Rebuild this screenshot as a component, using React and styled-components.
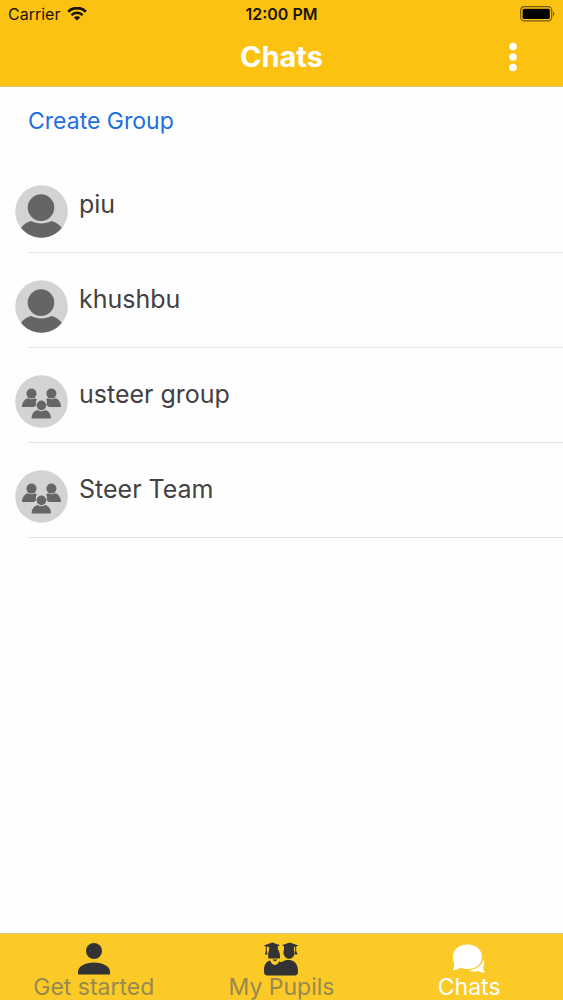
import React, { useState } from "react";
import styled, { createGlobalStyle } from "styled-components";

const chats = [
  { id: 1, name: "piu", group: false },
  { id: 2, name: "khushbu", group: false },
  { id: 3, name: "usteer group", group: true },
  { id: 4, name: "Steer Team", group: true },
];

const WifiIcon = () => (
  <svg width="20" height="14" viewBox="0 0 20 14" fill="none" aria-hidden="true">
    <path d="M1.2 4.8C6 -0.1 14 -0.1 18.8 4.8" stroke="#1a1503" strokeWidth="2.9" />
    <path d="M4.4 8.1C7.5 5 12.5 5 15.6 8.1" stroke="#1a1503" strokeWidth="2.6" />
    <path d="M10 13.6L6.8 10.5C8.5 8.8 11.5 8.8 13.2 10.5Z" fill="#1a1503" />
  </svg>
);

const BatteryIcon = () => (
  <svg width="35" height="16" viewBox="0 0 35 16" aria-hidden="true">
    <rect x="0.7" y="0.7" width="31" height="14.2" rx="3.6" fill="none" stroke="#6f5a14" strokeWidth="1.2" />
    <rect x="2.6" y="2.7" width="27.2" height="10.2" rx="1.5" fill="#000" />
    <path d="M33 5.4C34.8 6.2 34.8 9.4 33 10.2Z" fill="#6f5a14" />
  </svg>
);

const DotsIcon = () => (
  <svg width="8" height="30" viewBox="0 0 8 30" fill="#fff" aria-hidden="true">
    <circle cx="4" cy="4.5" r="3.8" />
    <circle cx="4" cy="15" r="3.8" />
    <circle cx="4" cy="25.5" r="3.8" />
  </svg>
);

const UserAvatar = () => (
  <svg width="53" height="53" viewBox="0 0 53 53" aria-hidden="true">
    <circle cx="26.5" cy="26.5" r="26.3" fill="#d4d2d3" />
    <circle cx="26" cy="22.6" r="13.3" fill="#666465" />
    <path
      d="M6 42.8C8.5 39.5 12 37.2 16.2 36C22 39.2 30.5 39.2 36.4 36C40.6 37.2 44.2 39.5 46.8 42.8C41.8 49 34.6 52.8 26.5 52.8C18.2 52.8 11 49 6 42.8Z"
      fill="#666465"
    />
  </svg>
);

const GroupAvatar = () => (
  <svg width="53" height="53" viewBox="0 0 53 53" fill="#666465" aria-hidden="true">
    <circle cx="26.5" cy="26.5" r="26.3" fill="#d4d2d3" />
    <circle cx="16.5" cy="18.6" r="5" />
    <path d="M7 32C7 27 10 23.8 13 23.3C15 24.6 18 24.6 20 23.3L22 24.6C20.6 26.3 20.6 28.6 21.4 30C20.4 30.5 19.8 31.2 19.3 32Z" />
    <circle cx="36.4" cy="18.6" r="5" />
    <path d="M46 32C46 27 43 23.8 40 23.3C38 24.6 35 24.6 33 23.3L31 24.6C32.3 26.3 32.3 28.6 31.3 30C32.6 30.5 33.3 31.2 33.8 32Z" />
    <circle cx="26.4" cy="30.4" r="4.8" />
    <path d="M16.6 43.5C16.6 39 19 35.8 22.6 35C24.8 36.6 28 36.6 30.2 35C33.6 35.8 36 39 36 43.5Z" />
  </svg>
);

const PersonIcon = () => (
  <svg width="34" height="32" viewBox="0 0 34 32" fill="#333" aria-hidden="true">
    <circle cx="17" cy="8" r="8" />
    <path d="M1 31.5V29C1 23.5 8 19.6 17 19.6C26 19.6 33 23.5 33 29V31.5Z" />
  </svg>
);

const PupilsIcon = () => (
  <svg width="36" height="34" viewBox="0 0 36 34" fill="#333" aria-hidden="true">
    <path d="M0.6 3.6L9.4 0.4L17 3.2L14.8 4.3V7C16.6 9.4 17.2 13 17 16.4H5.2C5 12.4 5.4 9.6 6.2 7V4.9L3.8 4.4V9L4.6 12.6H2L2.8 9V4.4Z" />
    <path d="M19 3.2L26.6 0.4L35.4 3.6L33.2 4.4V9L34.6 12.6H31.6L32.2 9V4.8L31 5.2V8.2C32.4 12 30.6 16.4 26.6 16.8C22 16.8 19.2 12 21 7.4V4.3Z" />
    <path d="M1 30.6C0.6 23 2.6 19.6 7.2 18.4C8.2 21.4 9.8 22.6 12 23C14.2 22.6 15.4 21.2 16.2 19.2L18.4 20.2C20.4 18.6 23 18 26 18C32 18.2 35.4 22.8 35 30.6C34.6 32.8 33.6 33.6 31.6 33.6H4.6C2.6 33.6 1.4 32.6 1 30.6Z" />
    <path d="M9.4 17.4H14.4L12.4 19.2H11.4Z" />
  </svg>
);

const BubblesIcon = () => (
  <svg width="34" height="30" viewBox="0 0 34 30" fill="#fff" aria-hidden="true">
    <path d="M15.4 0.4C24 0.4 30 5.8 30 12.9C30 20 24 25 15.4 25C13 25 10.8 24.6 8.9 23.8C6.6 25.3 3.8 26.2 0.8 26.2C2 24 2.2 21.2 2 18.8C1.2 17 0.8 15 0.8 12.9C0.8 5.8 6.8 0.4 15.4 0.4Z" />
    <path d="M31.3 15.6C32.7 18 32.6 21 31.2 23.2C31.2 25.2 31.9 27 33.2 28.6C30.4 28.6 28 28 26.2 27C22.6 28.2 19 27.8 16.6 26.3C24.2 25.8 30 22 31.3 15.6Z" />
  </svg>
);

const tabs = [
  { id: "start", label: "Get started", Icon: PersonIcon },
  { id: "pupils", label: "My Pupils", Icon: PupilsIcon },
  { id: "chats", label: "Chats", Icon: BubblesIcon },
];

const App = () => {
  const [active, setActive] = useState("chats");

  return (
    <>
      <GlobalStyle />
      <Page>
        <Header>
          <StatusBar>
            <Carrier>
              Carrier
              <WifiIcon />
            </Carrier>
            <Time>12:00 PM</Time>
            <Battery>
              <BatteryIcon />
            </Battery>
          </StatusBar>
          <TitleBar>
            <Title>Chats</Title>
            <MenuBtn type="button" aria-label="Menu">
              <DotsIcon />
            </MenuBtn>
          </TitleBar>
        </Header>
        <Main>
          <CreateGroup href="#create">Create Group</CreateGroup>
          <ChatList>
            {chats.map((chat) => (
              <ChatItem key={chat.id}>
                <ChatLink href={`#chat-${chat.id}`}>
                  {chat.group ? <GroupAvatar /> : <UserAvatar />}
                  <ChatName>{chat.name}</ChatName>
                </ChatLink>
                <Divider />
              </ChatItem>
            ))}
          </ChatList>
        </Main>
        <TabBar>
          {tabs.map(({ id, label, Icon }) => (
            <TabBtn
              key={id}
              type="button"
              $active={active === id}
              onClick={() => setActive(id)}
            >
              <IconBox>
                <Icon />
              </IconBox>
              {label}
            </TabBtn>
          ))}
        </TabBar>
      </Page>
    </>
  );
};

const GlobalStyle = createGlobalStyle`
  * {
    box-sizing: border-box;
  }
  body {
    margin: 0;
    background: #fefefe;
    color: #434143;
    font-family: Inter, "Liberation Sans", sans-serif;
  }
  button {
    border: none;
    padding: 0;
    background: none;
    font-family: inherit;
    cursor: pointer;
  }
  a {
    text-decoration: none;
  }
  svg {
    display: block;
    flex-shrink: 0;
  }
`;
const Page = styled.div`
  min-height: 100vh;
  display: flex;
  flex-direction: column;
`;
const Header = styled.header`
  background: #fcc211;
  border-bottom: 1px solid #e0c26a;
`;
const StatusBar = styled.div`
  display: grid;
  grid-template-columns: 1fr auto 1fr;
  align-items: center;
  height: 28px;
  padding: 0 8px;
  color: #1a1503;
  font-size: 16px;
  line-height: 28px;
`;
const Carrier = styled.div`
  display: flex;
  align-items: center;
  gap: 7px;
`;
const Time = styled.time`
  font-weight: 600;
`;
const Battery = styled.div`
  justify-self: end;
`;
const TitleBar = styled.div`
  display: grid;
  grid-template-columns: 1fr auto 1fr;
  align-items: center;
  height: 58px;
  padding: 0 46px;
`;
const Title = styled.h1`
  grid-column: 2;
  margin: 0;
  color: #fff;
  font-size: 29px;
  font-weight: 700;
  line-height: 36px;
`;
const MenuBtn = styled.button`
  justify-self: end;
`;
const Main = styled.main`
  flex: 1;
`;
const CreateGroup = styled.a`
  display: block;
  width: fit-content;
  margin: 20px 28px 23px;
  color: #1e6fe0;
  font-size: 23px;
  line-height: 28px;
`;
const ChatList = styled.ul`
  margin: 0;
  padding: 0;
  list-style: none;
`;
const ChatItem = styled.li`
  display: block;
`;
const ChatLink = styled.a`
  display: flex;
  gap: 11px;
  padding: 27px 15px 14px;
  color: inherit;
`;
const ChatName = styled.span`
  margin-top: 3px;
  font-size: 25px;
  line-height: 32px;
`;
const Divider = styled.div`
  height: 1px;
  margin-left: 28px;
  background: #e4e4e4;
`;
const TabBar = styled.nav`
  display: grid;
  grid-template-columns: repeat(3, 1fr);
  background: #fbca27;
  border-top: 1px solid #d9c88a;
`;
const TabBtn = styled.button`
  display: flex;
  flex-direction: column;
  align-items: center;
  padding: 8px 0 2px;
  color: ${({ $active }) => ($active ? "#fff" : "#97894f")};
  font-size: 23px;
  line-height: 22px;
`;
const IconBox = styled.span`
  display: flex;
  align-items: center;
  height: 34px;
`;

export default App;
